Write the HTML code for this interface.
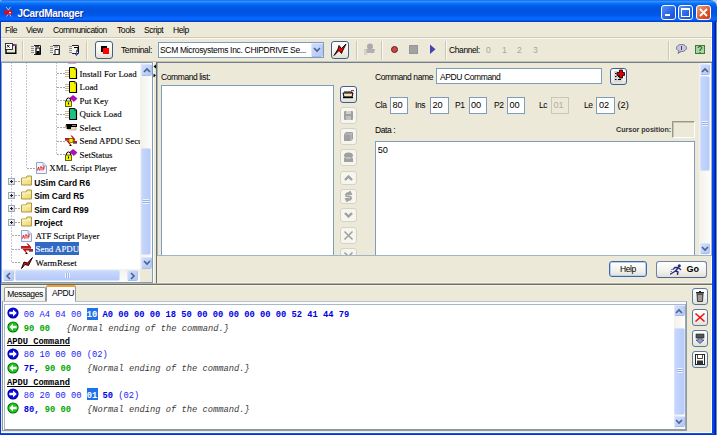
<!DOCTYPE html>
<html><head><meta charset="utf-8">
<style>
*{margin:0;padding:0;box-sizing:border-box}
html,body{width:717px;height:435px;overflow:hidden;background:#c4d4ec}
body{position:relative;font-family:"Liberation Sans",sans-serif;font-size:8.5px;letter-spacing:-0.4px;color:#000}
.a{position:absolute}
.t{position:absolute;white-space:pre;line-height:10px}
#title{left:0;top:0;width:717px;height:22px;border-radius:2px 7px 0 0;
background:linear-gradient(#0058ee 0px,#3d95ff 1px,#2b8dff 2px,#0b76fc 3px,#0265ef 5px,#0058e5 7px,#0054e1 12px,#0058e8 15px,#0766ff 18px,#0966fa 20px,#0042d0 21px,#0042d0 22px)}
#client{left:1px;top:22px;width:711px;height:411px;background:#ece9d8;border-right:1px solid #fbfaf4;border-bottom:1px solid #fbfaf4}
.sep{position:absolute;width:2px;border-left:1px solid #cbc8b8;border-right:1px solid #f8f7f0}
.btn{position:absolute;border:1px solid #3f5f86;border-radius:3px;background:linear-gradient(#fff,#f3f2ec 60%,#e3e0d4)}
.dbtn{position:absolute;border:1px solid #d6d3c5;border-radius:3px;background:#f6f5ee}
.fld{position:absolute;background:#fff;border:1px solid #7f9db9}
.sbar{position:absolute;background:linear-gradient(90deg,#f2f1ea,#fdfdfb)}
.sarr{position:absolute;border:1px solid #dce6fe;border-bottom-color:#a4bcee;border-right-color:#b0c4f0;border-radius:2px;background:linear-gradient(135deg,#cfdcfd,#b2c8f8)}
.thumb{position:absolute;border:1px solid #d4e0fd;border-radius:2px;background:linear-gradient(90deg,#c6d6fd,#b8cbf8)}
.tree{font-family:"Liberation Serif",serif;font-size:8.85px;letter-spacing:0;-webkit-text-stroke:0.12px currentColor}
.bold{font-weight:bold}
.mono{font-family:"Liberation Mono",monospace;font-size:8.75px;letter-spacing:0}
</style></head><body>
<div id="title" class="a"></div>
<!-- title icon -->
<svg class="a" style="left:3px;top:6px" width="12" height="11" viewBox="0 0 12 11">
<path d="M3 1 L6 4.5 M7.5 1 L5 4.5 M3.5 10.5 L5.5 8 M8 10.5 L6.5 8" stroke="#b8c8ea" stroke-width="1"/>
<path d="M1 6.5 Q1 4.6 2.8 4.6 H8 L10.5 6.5 L8 8.5 H2.8 Q1 8.5 1 6.5 Z" fill="#f00010"/><rect x="6" y="6" width="2" height="1.2" fill="#fff"/>
</svg>
<div class="t" style="left:17.5px;top:8px;font-size:10px;font-weight:bold;color:#fff;letter-spacing:-0.33px;line-height:12px;text-shadow:1px 1px 0 #0a2a9a">JCardManager</div>
<!-- title buttons -->
<div class="a" style="left:661px;top:5px;width:15px;height:15px;border:1px solid #fff;border-radius:3px;background:linear-gradient(135deg,#5a8ff6,#2663e5 60%,#1a50d0)"></div>
<div class="a" style="left:665px;top:14px;width:5px;height:2px;background:#fff"></div>
<div class="a" style="left:678px;top:5px;width:15px;height:15px;border:1px solid #fff;border-radius:3px;background:linear-gradient(135deg,#5a8ff6,#2663e5 60%,#1a50d0)"></div>
<div class="a" style="left:681px;top:8px;width:9px;height:9px;border:1px solid #fff;border-top-width:2px"></div>
<div class="a" style="left:696px;top:5px;width:15px;height:15px;border:1px solid #fff;border-radius:3px;background:linear-gradient(135deg,#f0a080,#e0542c 60%,#c83c14)"></div>
<svg class="a" style="left:696px;top:5px" width="15" height="15"><path d="M4 4 L11 11 M11 4 L4 11" stroke="#fff" stroke-width="1.8"/></svg>

<div id="client" class="a"></div>
<!-- menu -->
<div class="t" style="left:5px;top:25px">File</div>
<div class="t" style="left:26px;top:25px">View</div>
<div class="t" style="left:53px;top:25px">Communication</div>
<div class="t" style="left:117px;top:25px">Tools</div>
<div class="t" style="left:144px;top:25px">Script</div>
<div class="t" style="left:173px;top:25px">Help</div>
<div class="a" style="left:1px;top:37px;width:711px;height:1px;background:#cdcabb"></div>
<div class="a" style="left:1px;top:38px;width:711px;height:1px;background:#fbfaf4"></div>

<!-- toolbar -->
<div class="sep" style="left:22px;top:41px;height:19px"></div>
<div class="sep" style="left:86px;top:41px;height:19px"></div>
<div class="sep" style="left:356px;top:41px;height:19px"></div>
<div class="sep" style="left:381px;top:41px;height:19px"></div>
<div class="sep" style="left:445px;top:41px;height:19px"></div>
<div class="sep" style="left:668px;top:41px;height:19px"></div>
<div class="a" style="left:1px;top:61px;width:712px;height:1px;background:#c5c2b2"></div>
<!-- toolbar icons -->
<svg class="a" style="left:5px;top:43px" width="12" height="12" viewBox="0 0 12 12">
<rect x="0.5" y="0.5" width="7" height="6" fill="#fff" stroke="#222" stroke-width="0.9"/><path d="M2 2 L4.5 4.5 M4.5 2 L2 4.5" stroke="#000" stroke-width="0.9"/>
<path d="M1 6.5 V10.3 H10.8 V2 H8" fill="none" stroke="#000" stroke-width="1.4"/><rect x="8.5" y="1" width="2.5" height="2" fill="#9040a0"/>
</svg>
<svg class="a" style="left:31px;top:45px" width="11" height="10" viewBox="0 0 11 10">
<path d="M0 1.5H3 M0 3.5H3 M0 5.5H3 M0 7.5H3" stroke="#909090" stroke-width="1"/>
<path d="M3 0.5 H9.5 V9.5 H3" fill="#f4f4f4" stroke="#222" stroke-width="1"/>
<path d="M5 3 H9 V9 H5 Z" fill="none" stroke="#000" stroke-width="1.2"/><rect x="5.5" y="6" width="3" height="3" fill="#000"/><path d="M4 1.5 H8" stroke="#444"/>
</svg>
<svg class="a" style="left:50px;top:45px" width="10" height="10" viewBox="0 0 10 10">
<path d="M0 1.5H3 M0 3.5H3 M0 5.5H3 M0 7.5H3" stroke="#909090" stroke-width="1"/>
<path d="M3 0.5 H9.5 V9.5 H3" fill="#f4f4f4" stroke="#333" stroke-width="1"/>
<path d="M5 4.5 H9 V9.5 H5 Z" fill="#fff" stroke="#222" stroke-width="1"/><path d="M4 2 H8" stroke="#666"/>
</svg>
<svg class="a" style="left:69px;top:45px" width="11" height="11" viewBox="0 0 11 11">
<path d="M0 1.5H3 M0 3.5H3 M0 5.5H3 M0 7.5H3" stroke="#909090" stroke-width="1"/>
<path d="M3 0.5 H9.5 V8.5 H3" fill="#f4f4f4" stroke="#222" stroke-width="1"/>
<path d="M5 2.5 H9 V7" fill="none" stroke="#000" stroke-width="1.2"/><path d="M7.5 5 V10.5 M5.8 8.8 L7.5 10.5 L9.2 8.8" stroke="#5060c0" stroke-width="1"/>
</svg>
<div class="btn" style="left:95px;top:41px;width:18px;height:18px"></div>
<div class="a" style="left:101px;top:46px;width:6px;height:6px;background:#000"></div>
<div class="a" style="left:103px;top:48px;width:6px;height:6px;background:#f00"></div>
<div class="t" style="left:121px;top:45px">Terminal:</div>
<div class="fld" style="left:158px;top:42px;width:166px;height:16px"></div>
<div class="t" style="left:160px;top:45px;letter-spacing:-0.32px">SCM Microsystems Inc. CHIPDRIVE Se...</div>
<div class="sarr" style="left:311px;top:43px;width:12px;height:14px"></div>
<svg class="a" style="left:313px;top:47px" width="8" height="6"><path d="M1 1 L4 4 L7 1" fill="none" stroke="#4d6185" stroke-width="1.6"/></svg>
<div class="btn" style="left:331px;top:41px;width:18px;height:18px"></div>
<svg class="a" style="left:333px;top:43px" width="14" height="14" viewBox="0 0 14 14">
<path d="M1 12.5 L5 6 L6 2.5 L8.5 5.5 L13 1 L9.5 8 L8.5 10.5 L6 7.5 Z" fill="#f00000" stroke="#000" stroke-width="0.9" stroke-linejoin="round"/>
</svg>
<svg class="a" style="left:364px;top:43px" width="12" height="12" viewBox="0 0 12 12">
<circle cx="6" cy="3.5" r="3" fill="#aaa"/><path d="M2 6 H11 L10 10 H3 Z" fill="#b0b0b0"/><path d="M0 7 H3 M0 9 H3 M0 11 H3" stroke="#bbb"/>
</svg>
<div class="a" style="left:391px;top:46px;width:7px;height:7px;border-radius:50%;background:#c84848;border:0.6px solid #602020"></div>
<div class="a" style="left:409px;top:45px;width:9px;height:9px;background:#a2a2a2;border:1px solid #959595"></div>
<svg class="a" style="left:430px;top:44px" width="6" height="11"><path d="M0 0.5 L5.5 5.3 L0 10 Z" fill="#4444b0"/></svg>
<div class="t" style="left:449px;top:45px">Channel:</div>
<div class="t" style="left:486px;top:45px;color:#a5a5a5">0</div>
<div class="t" style="left:502px;top:45px;color:#a5a5a5">1</div>
<div class="t" style="left:517px;top:45px;color:#a5a5a5">2</div>
<div class="t" style="left:533px;top:45px;color:#a5a5a5">3</div>
<svg class="a" style="left:676px;top:44px" width="11" height="10" viewBox="0 0 11 10">
<ellipse cx="5.5" cy="4" rx="5" ry="3.6" fill="#c8c8e0" stroke="#606080" stroke-width="0.8"/><path d="M3 7 L2 9.5 L5 7.5" fill="#c8c8e0" stroke="#606080" stroke-width="0.8"/><rect x="5" y="2" width="1" height="4" fill="#404060"/>
</svg>
<div class="a" style="left:695px;top:45px;width:10px;height:9px;background:#a8d8a0;border:1px solid #3a7a3a"></div>
<svg class="a" style="left:697px;top:46px" width="6" height="7"><path d="M1 2 Q1 0.5 3 0.5 Q5 0.5 5 2 Q5 3 3 3.5 V5 M3 6 V7" fill="none" stroke="#205020" stroke-width="1"/></svg>


<div class="a" style="left:1px;top:62px;width:152px;height:221px;background:#fff;border:1px solid #7f9db9"></div>
<div class="a" style="left:2px;top:63px;width:138px;height:206px;overflow:hidden">
<div class="a" style="left:8.5px;top:-1px;width:1.5px;height:201px;background:repeating-linear-gradient(#c8c8c8 0 2px,transparent 2px 3px)"></div>
<div class="a" style="left:23.5px;top:-1px;width:1.5px;height:106px;background:repeating-linear-gradient(#c8c8c8 0 2px,transparent 2px 3px)"></div>
<div class="a" style="left:53.5px;top:-1px;width:1.5px;height:93px;background:repeating-linear-gradient(#c8c8c8 0 2px,transparent 2px 3px)"></div>
<div class="a" style="left:55px;top:10px;width:8px;height:1px;background:repeating-linear-gradient(90deg,#a8a8a8 0 2px,transparent 2px 3px)"></div>
<div class="a" style="left:55px;top:24px;width:8px;height:1px;background:repeating-linear-gradient(90deg,#a8a8a8 0 2px,transparent 2px 3px)"></div>
<div class="a" style="left:55px;top:37px;width:8px;height:1px;background:repeating-linear-gradient(90deg,#a8a8a8 0 2px,transparent 2px 3px)"></div>
<div class="a" style="left:55px;top:51px;width:8px;height:1px;background:repeating-linear-gradient(90deg,#a8a8a8 0 2px,transparent 2px 3px)"></div>
<div class="a" style="left:55px;top:64px;width:8px;height:1px;background:repeating-linear-gradient(90deg,#a8a8a8 0 2px,transparent 2px 3px)"></div>
<div class="a" style="left:55px;top:78px;width:8px;height:1px;background:repeating-linear-gradient(90deg,#a8a8a8 0 2px,transparent 2px 3px)"></div>
<div class="a" style="left:55px;top:91px;width:8px;height:1px;background:repeating-linear-gradient(90deg,#a8a8a8 0 2px,transparent 2px 3px)"></div>
<div class="a" style="left:25px;top:105px;width:9px;height:1px;background:repeating-linear-gradient(90deg,#a8a8a8 0 2px,transparent 2px 3px)"></div>
<div class="a" style="left:10px;top:118px;width:9px;height:1px;background:repeating-linear-gradient(90deg,#a8a8a8 0 2px,transparent 2px 3px)"></div>
<div class="a" style="left:10px;top:132px;width:9px;height:1px;background:repeating-linear-gradient(90deg,#a8a8a8 0 2px,transparent 2px 3px)"></div>
<div class="a" style="left:10px;top:145px;width:9px;height:1px;background:repeating-linear-gradient(90deg,#a8a8a8 0 2px,transparent 2px 3px)"></div>
<div class="a" style="left:10px;top:159px;width:9px;height:1px;background:repeating-linear-gradient(90deg,#a8a8a8 0 2px,transparent 2px 3px)"></div>
<div class="a" style="left:10px;top:172px;width:9px;height:1px;background:repeating-linear-gradient(90deg,#a8a8a8 0 2px,transparent 2px 3px)"></div>
<div class="a" style="left:10px;top:186px;width:9px;height:1px;background:repeating-linear-gradient(90deg,#a8a8a8 0 2px,transparent 2px 3px)"></div>
<div class="a" style="left:10px;top:199px;width:9px;height:1px;background:repeating-linear-gradient(90deg,#a8a8a8 0 2px,transparent 2px 3px)"></div>
<div class="a" style="left:66px;top:0px;width:8px;height:1px;background:#f0a0d0"></div>
<svg class="a" style="left:63px;top:4px" width="13" height="12" viewBox="0 0 13 12">
<path d="M0 3.5H5 M0 5.5H5 M0 7.5H5 M0 9.5H5" stroke="#c8b890" stroke-width="1"/>
<path d="M4.5 0.5 H10 L11.5 2 V11.5 H4.5 Z" fill="#f4f400" stroke="#000" stroke-width="1"/>
<path d="M11.5 2.5 V11.5 H5" fill="none" stroke="#000" stroke-width="1.2"/>
<path d="M9.5 0.5 V2.5 H11.5" fill="none" stroke="#808000" stroke-width="0.8"/>
</svg>
<svg class="a" style="left:63px;top:18px" width="13" height="12" viewBox="0 0 13 12">
<path d="M0 3.5H5 M0 5.5H5 M0 7.5H5 M0 9.5H5" stroke="#c8b890" stroke-width="1"/>
<path d="M4.5 0.5 H10 L11.5 2 V11.5 H4.5 Z" fill="#f4f400" stroke="#000" stroke-width="1"/>
<path d="M11.5 2.5 V11.5 H5" fill="none" stroke="#000" stroke-width="1.2"/>
<path d="M9.5 0.5 V2.5 H11.5" fill="none" stroke="#808000" stroke-width="0.8"/>
</svg>
<svg class="a" style="left:63px;top:32px" width="13" height="12" viewBox="0 0 13 12">
<path d="M5 3 L8 0.5 L12 3.5 L9 6.5 Z" fill="#c800c8" stroke="#600060" stroke-width="0.6"/>
<path d="M1.5 6 V5 A2 2 0 0 1 5.5 5 V6" fill="none" stroke="#000" stroke-width="1"/>
<rect x="0.5" y="6" width="6" height="5.5" fill="#f0f000" stroke="#404000" stroke-width="0.8"/>
<rect x="3" y="7.5" width="1" height="2" fill="#000"/>
</svg>
<svg class="a" style="left:63px;top:45px" width="13" height="12" viewBox="0 0 13 12">
<path d="M0 3.5H5 M0 5.5H5 M0 7.5H5 M0 9.5H5" stroke="#c8b890" stroke-width="1"/>
<path d="M4.5 0.5 H10 L11.5 2 V11.5 H4.5 Z" fill="#20c080" stroke="#000" stroke-width="1"/>
<path d="M11.5 2.5 V11.5 H5" fill="none" stroke="#000" stroke-width="1.2"/>
<path d="M9.5 0.5 V2.5 H11.5" fill="none" stroke="#006030" stroke-width="0.8"/>
</svg>
<svg class="a" style="left:63px;top:60px" width="13" height="10" viewBox="0 0 13 10">
<path d="M0.5 2 H11 V7 H4 L0.5 5 Z" fill="#e8dcc0" stroke="#a89870" stroke-width="0.6"/>
<path d="M1 1 H12 V4 H6 V6 H2 Z" fill="#000"/><rect x="7" y="2" width="4" height="1" fill="#888"/>
</svg>
<svg class="a" style="left:63px;top:72px" width="12" height="11" viewBox="0 0 12 11">
<path d="M0 4.5 H10.5 L7 0.5 H5.5 L7.5 3 H0 Z" fill="#f00000"/><path d="M0 5 H10" stroke="#000" stroke-width="1"/>
<path d="M12 6 H1.5 L5 10 H6.5 L4.5 7.5 H12 Z" fill="#f00000"/><path d="M4.5 10.5 H6.5 M8 8 H12" stroke="#000" stroke-width="1"/><rect x="4" y="3.5" width="4" height="4" fill="#f0f000" stroke="#606000" stroke-width="0.6"/></svg>
<svg class="a" style="left:63px;top:86px" width="13" height="12" viewBox="0 0 13 12">
<path d="M5 3 L8 0.5 L12 3.5 L9 6.5 Z" fill="#c800c8" stroke="#600060" stroke-width="0.6"/>
<path d="M1.5 6 V5 A2 2 0 0 1 5.5 5 V6" fill="none" stroke="#000" stroke-width="1"/>
<rect x="0.5" y="6" width="6" height="5.5" fill="#f0f000" stroke="#404000" stroke-width="0.8"/>
<rect x="3" y="7.5" width="1" height="2" fill="#000"/>
</svg>
<svg class="a" style="left:34px;top:99px" width="11" height="12" viewBox="0 0 11 12">
<path d="M0.5 0.5 H7 L10.5 4 V11.5 H0.5 Z" fill="#f2f6fe" stroke="#90a4cc" stroke-width="1"/>
<path d="M7 0.5 V4 H10.5" fill="#d8e2f4" stroke="#90a4cc" stroke-width="0.8"/>
<path d="M1.5 8.5 L2.5 5 L3.5 8.5 M4 5 H6 M5 5 V8.5 M7 8.5 V5 H9 M7 6.7 H8.5" fill="none" stroke="#e82020" stroke-width="1"/>
</svg>
<div class="a" style="left:6px;top:115px;width:7px;height:7px;border:1px solid #98a8c0;background:linear-gradient(135deg,#fff,#d4d4cc)"></div>
<div class="a" style="left:8px;top:118px;width:3px;height:1px;background:#202020"></div>
<div class="a" style="left:9px;top:117px;width:1px;height:3px;background:#202020"></div>
<svg class="a" style="left:18.5px;top:112px" width="12" height="11" viewBox="0 0 12 11">
<defs><linearGradient id="fg" x1="0" y1="0" x2="1" y2="1"><stop offset="0" stop-color="#fff4b0"/><stop offset="1" stop-color="#f0d478"/></linearGradient></defs>
<path d="M0.5 3 H5 L6 1 H10.5 V10 H0.5 Z" fill="url(#fg)" stroke="#a89a40" stroke-width="1"/>
<path d="M1 4 H10" stroke="#fffbe0" stroke-width="0.8"/>
</svg>
<div class="a" style="left:6px;top:129px;width:7px;height:7px;border:1px solid #98a8c0;background:linear-gradient(135deg,#fff,#d4d4cc)"></div>
<div class="a" style="left:8px;top:132px;width:3px;height:1px;background:#202020"></div>
<div class="a" style="left:9px;top:131px;width:1px;height:3px;background:#202020"></div>
<svg class="a" style="left:18.5px;top:126px" width="12" height="11" viewBox="0 0 12 11">
<defs><linearGradient id="fg" x1="0" y1="0" x2="1" y2="1"><stop offset="0" stop-color="#fff4b0"/><stop offset="1" stop-color="#f0d478"/></linearGradient></defs>
<path d="M0.5 3 H5 L6 1 H10.5 V10 H0.5 Z" fill="url(#fg)" stroke="#a89a40" stroke-width="1"/>
<path d="M1 4 H10" stroke="#fffbe0" stroke-width="0.8"/>
</svg>
<div class="a" style="left:6px;top:142px;width:7px;height:7px;border:1px solid #98a8c0;background:linear-gradient(135deg,#fff,#d4d4cc)"></div>
<div class="a" style="left:8px;top:145px;width:3px;height:1px;background:#202020"></div>
<div class="a" style="left:9px;top:144px;width:1px;height:3px;background:#202020"></div>
<svg class="a" style="left:18.5px;top:139px" width="12" height="11" viewBox="0 0 12 11">
<defs><linearGradient id="fg" x1="0" y1="0" x2="1" y2="1"><stop offset="0" stop-color="#fff4b0"/><stop offset="1" stop-color="#f0d478"/></linearGradient></defs>
<path d="M0.5 3 H5 L6 1 H10.5 V10 H0.5 Z" fill="url(#fg)" stroke="#a89a40" stroke-width="1"/>
<path d="M1 4 H10" stroke="#fffbe0" stroke-width="0.8"/>
</svg>
<div class="a" style="left:6px;top:156px;width:7px;height:7px;border:1px solid #98a8c0;background:linear-gradient(135deg,#fff,#d4d4cc)"></div>
<div class="a" style="left:8px;top:159px;width:3px;height:1px;background:#202020"></div>
<div class="a" style="left:9px;top:158px;width:1px;height:3px;background:#202020"></div>
<svg class="a" style="left:18.5px;top:153px" width="12" height="11" viewBox="0 0 12 11">
<defs><linearGradient id="fg" x1="0" y1="0" x2="1" y2="1"><stop offset="0" stop-color="#fff4b0"/><stop offset="1" stop-color="#f0d478"/></linearGradient></defs>
<path d="M0.5 3 H5 L6 1 H10.5 V10 H0.5 Z" fill="url(#fg)" stroke="#a89a40" stroke-width="1"/>
<path d="M1 4 H10" stroke="#fffbe0" stroke-width="0.8"/>
</svg>
<svg class="a" style="left:19px;top:166.5px" width="11" height="12" viewBox="0 0 11 12">
<path d="M0.5 0.5 H7 L10.5 4 V11.5 H0.5 Z" fill="#f2f6fe" stroke="#90a4cc" stroke-width="1"/>
<path d="M7 0.5 V4 H10.5" fill="#d8e2f4" stroke="#90a4cc" stroke-width="0.8"/>
<path d="M1.5 8.5 L2.5 5 L3.5 8.5 M4 5 H6 M5 5 V8.5 M7 8.5 V5 H9 M7 6.7 H8.5" fill="none" stroke="#e82020" stroke-width="1"/>
</svg>
<svg class="a" style="left:19px;top:180px" width="12" height="11" viewBox="0 0 12 11">
<path d="M0 4.5 H10.5 L7 0.5 H5.5 L7.5 3 H0 Z" fill="#f00000"/><path d="M0 5 H10" stroke="#000" stroke-width="1"/>
<path d="M12 6 H1.5 L5 10 H6.5 L4.5 7.5 H12 Z" fill="#f00000"/><path d="M4.5 10.5 H6.5 M8 8 H12" stroke="#000" stroke-width="1"/></svg>
<svg class="a" style="left:19px;top:193.5px" width="12" height="12" viewBox="0 0 12 12">
<path d="M0.5 11.5 L3 5 L6.5 6 L11.5 0.5 L7.5 8.5 L4 7.5 Z" fill="#e80000" stroke="#000" stroke-width="0.9"/>
</svg>
<div class="t tree" style="left:77.6px;top:5.5px;color:#000">Install For Load</div>
<div class="t tree" style="left:77.6px;top:19.0px;color:#000">Load</div>
<div class="t tree" style="left:77.6px;top:32.5px;color:#000">Put Key</div>
<div class="t tree" style="left:77.6px;top:46.0px;color:#000">Quick Load</div>
<div class="t tree" style="left:77.6px;top:59.5px;color:#000">Select</div>
<div class="t tree" style="left:77.6px;top:73.0px;color:#000">Send APDU Secu</div>
<div class="t tree" style="left:77.6px;top:86.5px;color:#000">SetStatus</div>
<div class="t tree" style="left:47.3px;top:100.0px;color:#000">XML Script Player</div>
<div class="t" style="left:32.2px;top:114.5px;font-weight:bold;font-size:8.4px;letter-spacing:0px;color:#000">USim Card R6</div>
<div class="t" style="left:32.2px;top:128.0px;font-weight:bold;font-size:8.4px;letter-spacing:0px;color:#000">Sim Card R5</div>
<div class="t" style="left:32.2px;top:141.5px;font-weight:bold;font-size:8.4px;letter-spacing:0px;color:#000">Sim Card R99</div>
<div class="t" style="left:32.2px;top:155.0px;font-weight:bold;font-size:8.4px;letter-spacing:0px;color:#000">Project</div>
<div class="t tree" style="left:33.6px;top:167.5px;color:#000">ATF Script Player</div>
<div class="a" style="left:33px;top:179px;width:44px;height:13px;background:#316ac5"></div>
<div class="t tree" style="left:33.6px;top:181.0px;color:#fff">Send APDU</div>
<div class="t tree" style="left:33.6px;top:194.5px;color:#000">WarmReset</div>
</div>
<div class="sbar" style="left:140px;top:63px;width:12px;height:206px"></div>
<div class="sarr" style="left:141px;top:64px;width:11px;height:12px"></div>
<svg class="a" style="left:143px;top:67px" width="8" height="6"><path d="M1 5 L4 2 L7 5" fill="none" stroke="#4d6185" stroke-width="1.6"/></svg>
<div class="thumb" style="left:141px;top:148px;width:10px;height:107px"></div>
<div class="a" style="left:143px;top:199px;width:6px;height:5px;background:repeating-linear-gradient(#eef3fe 0 1px,#98b0e4 1px 2px)"></div>
<div class="sarr" style="left:141px;top:257px;width:11px;height:12px"></div>
<svg class="a" style="left:143px;top:260px" width="8" height="6"><path d="M1 1 L4 4 L7 1" fill="none" stroke="#4d6185" stroke-width="1.6"/></svg>
<div class="sbar" style="left:2px;top:269px;width:138px;height:13px;background:linear-gradient(#f2f1ea,#fdfdfb)"></div>
<div class="sarr" style="left:3px;top:270px;width:11px;height:11px"></div>
<svg class="a" style="left:5px;top:272px" width="7" height="8"><path d="M5 1 L2 4 L5 7" fill="none" stroke="#4d6185" stroke-width="1.6"/></svg>
<div class="thumb" style="left:15px;top:270px;width:105px;height:11px;background:linear-gradient(#c9d8fd,#b4c9f7)"></div>
<div class="a" style="left:65px;top:273px;width:5px;height:5px;background:repeating-linear-gradient(90deg,#eef3fe 0 1px,#98b0e4 1px 2px)"></div>
<div class="sarr" style="left:127px;top:270px;width:11px;height:11px"></div>
<svg class="a" style="left:129px;top:272px" width="7" height="8"><path d="M2 1 L5 4 L2 7" fill="none" stroke="#4d6185" stroke-width="1.6"/></svg>
<div class="a" style="left:153px;top:62px;width:1px;height:221px;background:#fff"></div>
<div class="a" style="left:140px;top:269px;width:12px;height:13px;background:#ece9d8"></div>
<div class="a" style="left:156px;top:62px;width:557px;height:1px;background:#6f7f8f"></div>
<div class="a" style="left:156px;top:62px;width:1px;height:222px;background:#716f64"></div>
<div class="a" style="left:157px;top:256px;width:554px;height:27px;background:#ece9d8;box-shadow:inset 0 -1px 0 #f2f0e6"></div>
<svg class="a" style="left:153px;top:64px" width="3" height="14"><path d="M3 0.5 L0.5 2.5 L3 4.5 Z M0.5 9.5 L3 11.5 L0.5 13.5 Z" fill="#000"/></svg>
<div class="a" style="left:157px;top:63px;width:1px;height:192px;background:#a0b4c8"></div>
<div class="a" style="left:157px;top:255px;width:555px;height:1px;background:#a0b4c8"></div>
<div class="a" style="left:711px;top:63px;width:1px;height:193px;background:#a0b4c8"></div>
<div class="a" style="left:1px;top:283px;width:711px;height:3px;background:linear-gradient(#b4b2a4 0 1px,#6f6e62 1px 2px,#f6f4ea 2px 3px)"></div>
<div class="t" style="left:161px;top:71.5px">Command list:</div>
<div class="a" style="left:158px;top:63px;width:541px;height:192px;overflow:hidden">
<div class="a" style="left:3px;top:22px;width:173px;height:175px;background:#fff;border:1px solid #7f9db9"></div>
<div class="btn" style="left:182px;top:23px;width:17px;height:17px;border-color:#3a5f95"></div>
<svg class="a" style="left:184px;top:26px" width="13" height="11" viewBox="0 0 13 11"><path d="M1 4 H11 L10 8 H2 Z" fill="#f4e0c0" stroke="#000" stroke-width="1"/><path d="M2 3 H10 V4" fill="none" stroke="#000"/><rect x="9" y="1" width="3" height="1.2" fill="#c03030"/><path d="M1 8.5 H11" stroke="#000" stroke-width="1.4"/></svg>
<div class="dbtn" style="left:182px;top:44px;width:17px;height:17px"></div>
<div class="dbtn" style="left:182px;top:65px;width:17px;height:17px"></div>
<div class="dbtn" style="left:182px;top:86px;width:17px;height:17px"></div>
<div class="dbtn" style="left:182px;top:108px;width:17px;height:14px"></div>
<div class="dbtn" style="left:182px;top:126px;width:17px;height:15px"></div>
<div class="dbtn" style="left:182px;top:145px;width:17px;height:14px"></div>
<div class="dbtn" style="left:182px;top:164px;width:17px;height:17px"></div>
<div class="dbtn" style="left:182px;top:185px;width:17px;height:17px"></div>
<svg class="a" style="left:185px;top:47px" width="11" height="11" viewBox="0 0 11 11"><path d="M1 2 Q1 1 2 1 H9 Q10 1 10 2 V9 Q10 10 9 10 H2 Q1 10 1 9 Z" fill="#a0a0a0"/><rect x="3" y="1" width="5" height="3" fill="#d0d0d0"/><rect x="3" y="6" width="5" height="4" fill="#c0c0c0"/></svg>
<svg class="a" style="left:185px;top:68px" width="11" height="11" viewBox="0 0 11 11"><path d="M3 1 H10 V8 L8 10 H1 V3 Z" fill="#a0a0a0"/><path d="M1 3 H8 V10 M8 3 L10 1" fill="none" stroke="#ccc" stroke-width="0.8"/></svg>
<svg class="a" style="left:185px;top:89px" width="11" height="11" viewBox="0 0 11 11"><ellipse cx="5.5" cy="3.5" rx="4.5" ry="3" fill="#a0a0a0"/><rect x="1" y="6" width="9" height="4" fill="#a0a0a0"/><rect x="3" y="5.5" width="5" height="1" fill="#ddd"/></svg>
<svg class="a" style="left:186px;top:112px" width="9" height="6"><path d="M1 5 L4.5 1.5 L8 5" fill="none" stroke="#a0a0a0" stroke-width="2.4"/></svg>
<svg class="a" style="left:185px;top:128px" width="11" height="11" viewBox="0 0 11 11"><path d="M2 4 Q3 1 6 1.5 L7 0 L9 3.5 L5 4 L5.5 3 Q4 3 3.5 4.5 Z M9 7 Q8 10 5 9.5 L4 11 L2 7.5 L6 7 L5.5 8 Q7 8 7.5 6.5 Z" fill="#a0a0a0" stroke="#a0a0a0" stroke-width="0.8"/><path d="M2.5 5 L8.5 6" stroke="#a0a0a0" stroke-width="1.6"/></svg>
<svg class="a" style="left:186px;top:149px" width="9" height="6"><path d="M1 1 L4.5 4.5 L8 1" fill="none" stroke="#a0a0a0" stroke-width="2.4"/></svg>
<svg class="a" style="left:185px;top:167px" width="11" height="11"><path d="M1.5 1.5 L9.5 9.5 M9.5 1.5 L1.5 9.5" stroke="#a0a0a0" stroke-width="1.6"/></svg>
<svg class="a" style="left:185px;top:188px" width="11" height="11"><path d="M1.5 1.5 L9.5 9.5 M9.5 1.5 L1.5 9.5" stroke="#a0a0a0" stroke-width="1.6"/></svg>
<div class="t" style="left:217px;top:9px;">Command name</div>
<div class="fld" style="left:278px;top:5px;width:166px;height:16px;"></div>
<div class="t" style="left:282px;top:9px;">APDU Command</div>
<div class="btn" style="left:452px;top:5px;width:17px;height:17px;border-color:#3a5f95"></div>
<svg class="a" style="left:454px;top:6px" width="15" height="15" viewBox="0 0 15 15"><rect x="2" y="2" width="8" height="11" fill="#d8d8d8"/><path d="M3 4.5 H4.5 M3 7.5 H4.5 M3 10.5 H4.5 M6 10.5 H9 M6 7.5 H7" stroke="#000" stroke-width="1.2"/><path d="M5 3.5 H7.5 V1 H10.5 V3.5 H12.5 V6.5 H10.5 V9 H7.5 V6.5 H5 Z" fill="#e00000" stroke="#000" stroke-width="0.8"/></svg>
<div class="t" style="left:217px;top:37px;">Cla</div>
<div class="fld" style="left:232px;top:34px;width:18px;height:17px;"></div>
<div class="t" style="left:234.5px;top:36.5px;font-size:9.2px;letter-spacing:0">80</div>
<div class="t" style="left:257px;top:37px;">Ins</div>
<div class="fld" style="left:272px;top:34px;width:19px;height:17px;"></div>
<div class="t" style="left:274.5px;top:36.5px;font-size:9.2px;letter-spacing:0">20</div>
<div class="t" style="left:297px;top:37px;">P1</div>
<div class="fld" style="left:311px;top:34px;width:18px;height:17px;"></div>
<div class="t" style="left:313px;top:36.5px;font-size:9.2px;letter-spacing:0">00</div>
<div class="t" style="left:336px;top:37px;">P2</div>
<div class="fld" style="left:349px;top:34px;width:18px;height:17px;"></div>
<div class="t" style="left:351.5px;top:36.5px;font-size:9.2px;letter-spacing:0">00</div>
<div class="t" style="left:381px;top:37px;">Lc</div>
<div class="fld" style="left:393px;top:34px;width:18px;height:17px;background:#ece9d8;border-color:#c9c7ba"></div>
<div class="t" style="left:395.5px;top:36.5px;color:#b0ae9f;font-size:9.2px;letter-spacing:0">01</div>
<div class="t" style="left:426px;top:37px;">Le</div>
<div class="fld" style="left:438px;top:34px;width:19px;height:17px;"></div>
<div class="t" style="left:441px;top:36.5px;font-size:9.2px;letter-spacing:0">02</div>
<div class="t" style="left:459.5px;top:36.5px;font-size:9.2px;letter-spacing:0">(2)</div>
<div class="t" style="left:217px;top:62px;">Data :</div>
<div class="t" style="left:458px;top:61.8px;font-size:7.2px;font-weight:bold;letter-spacing:-0.05px;color:#383838">Cursor position:</div>
<div class="a" style="left:514px;top:58px;width:23px;height:17px;border:1px solid #9a978a;border-right-color:#fff;border-bottom-color:#fff;box-shadow:inset 1px 1px 0 #c8c5b5;background:#ece9d8"></div>
<div class="fld" style="left:217px;top:78px;width:320px;height:130px;"></div>
<div class="t" style="left:219.7px;top:81.5px;font-size:9.2px;letter-spacing:0">50</div>
</div>
<div class="sbar" style="left:699px;top:63px;width:12px;height:192px"></div>
<div class="sarr" style="left:700px;top:64px;width:10px;height:11px"></div>
<svg class="a" style="left:701px;top:67px" width="8" height="6"><path d="M1 5 L4 2 L7 5" fill="none" stroke="#4d6185" stroke-width="1.6"/></svg>
<div class="thumb" style="left:700px;top:76px;width:10px;height:95px"></div>
<div class="a" style="left:702px;top:121px;width:6px;height:5px;background:repeating-linear-gradient(#eef3fe 0 1px,#98b0e4 1px 2px)"></div>
<div class="sarr" style="left:700px;top:243px;width:10px;height:11px"></div>
<svg class="a" style="left:701px;top:246px" width="8" height="6"><path d="M1 1 L4 4 L7 1" fill="none" stroke="#4d6185" stroke-width="1.6"/></svg>
<div class="btn" style="left:609px;top:261px;width:38px;height:16px;border-color:#3c6aa8;box-shadow:inset 0 0 0 1px #b8d0f8"></div>
<div class="t" style="left:620px;top:264px">Help</div>
<div class="btn" style="left:656px;top:261px;width:51px;height:17px;border-color:#6f84a8;border-bottom-color:#4a6590"></div>
<svg class="a" style="left:670px;top:264px" width="12" height="11" viewBox="0 0 12 11"><circle cx="9.3" cy="1.8" r="1.5" fill="#2a2a80"/><path d="M8.5 3.5 L5.5 7 M8.5 3.8 L10.5 5.5 M8 3.5 L5 3.5 L3.5 5 M5.5 7 L8 8 L7.5 10.5 M5.5 7 L3 8.5 L0.5 10" fill="none" stroke="#2a2a80" stroke-width="1.4" stroke-linecap="round"/><path d="M1 5.5 H3 M0.5 7.5 H2" stroke="#6060b0" stroke-width="0.8"/></svg>
<div class="t" style="left:686.5px;top:264px;font-weight:bold;font-size:9px;letter-spacing:-0.1px">Go</div>
<div class="a" style="left:4px;top:287px;width:42px;height:15px;border:1px solid #919b9c;border-bottom:none;border-radius:2px 2px 0 0;background:linear-gradient(#fefefe,#f0efe8)"></div>
<div class="t" style="left:7.3px;top:289px">Messages</div>
<div class="a" style="left:46px;top:286px;width:30px;height:17px;border:1px solid #919b9c;border-bottom:none;border-radius:2px 2px 0 0;background:#fcfcfe"></div>
<div class="a" style="left:46px;top:285px;width:30px;height:2px;background:#f0a030;border-radius:2px 2px 0 0"></div>
<div class="t" style="left:52px;top:288px">APDU</div>
<div class="a" style="left:2px;top:301px;width:685px;height:130px;background:#fcfcfe;border:1px solid #919b9c;border-top-color:#b8c0c8"></div>
<div class="a" style="left:47px;top:301px;width:28px;height:1px;background:#fcfcfe"></div>
<div class="a" style="left:4px;top:304px;width:682px;height:126px;background:#fff;border:1px solid #a8b8cc;border-right-color:#98a8b8;border-bottom-color:#8898a8"></div>
<div class="sbar" style="left:674px;top:305px;width:11px;height:124px"></div>
<div class="sarr" style="left:674px;top:305px;width:11px;height:11px"></div>
<svg class="a" style="left:675px;top:308px" width="8" height="6"><path d="M1 5 L4 2 L7 5" fill="none" stroke="#4d6185" stroke-width="1.6"/></svg>
<div class="thumb" style="left:674px;top:328px;width:11px;height:87px"></div>
<div class="a" style="left:677px;top:368px;width:6px;height:5px;background:repeating-linear-gradient(#eef3fe 0 1px,#98b0e4 1px 2px)"></div>
<div class="sarr" style="left:674px;top:416px;width:11px;height:11px"></div>
<svg class="a" style="left:675px;top:419px" width="8" height="6"><path d="M1 1 L4 4 L7 1" fill="none" stroke="#4d6185" stroke-width="1.6"/></svg>
<div class="btn" style="left:692px;top:288px;width:16px;height:17px;border-color:#5a7aa0"></div>
<div class="btn" style="left:692px;top:309px;width:16px;height:17px;border-color:#5a7aa0"></div>
<div class="btn" style="left:692px;top:330px;width:16px;height:17px;border-color:#5a7aa0"></div>
<div class="btn" style="left:692px;top:351px;width:16px;height:17px;border-color:#5a7aa0"></div>
<svg class="a" style="left:695px;top:291px" width="10" height="11" viewBox="0 0 10 11"><rect x="1" y="1" width="8" height="1.5" fill="#222"/><rect x="4" y="0" width="2" height="1" fill="#222"/><path d="M2 3 H8 L7.5 10.5 H2.5 Z" fill="#777" stroke="#222" stroke-width="0.8"/><path d="M4 4 V10 M6 4 V10" stroke="#ddd" stroke-width="0.7"/></svg>
<svg class="a" style="left:694px;top:312px" width="12" height="11"><path d="M1.5 1.5 L10.5 9.5 M10.5 1.5 L1.5 9.5" stroke="#f01010" stroke-width="1.6"/></svg>
<svg class="a" style="left:695px;top:333px" width="10" height="11" viewBox="0 0 10 11"><rect x="1" y="1" width="8" height="4" fill="#555" stroke="#222" stroke-width="0.6"/><path d="M3 5 H7 V7 H9 L5 10.5 L1 7 H3 Z" fill="#8a9ad0" stroke="#303050" stroke-width="0.6"/></svg>
<svg class="a" style="left:695px;top:354px" width="10" height="11" viewBox="0 0 10 11"><rect x="0.5" y="0.5" width="9" height="10" fill="#fff" stroke="#222"/><rect x="2.5" y="0.5" width="5" height="4" fill="#fff" stroke="#222" stroke-width="0.8"/><rect x="2" y="6.5" width="6" height="4" fill="#333"/></svg>
<svg class="a" style="left:6.5px;top:307px" width="12" height="12" viewBox="0 0 12 12"><circle cx="6" cy="6" r="5.6" fill="#000090"/><circle cx="6" cy="6" r="4.7" fill="#0808e0"/><path d="M2.3 4.8 H6 V2.4 L9.8 6 L6 9.6 V7.2 H2.3 Z" fill="#fff"/></svg>
<div class="t mono" style="left:23.7px;top:309.5px;color:#1c1cf4;">00 A4 04 00</div>
<div class="a" style="left:86.5px;top:307.5px;width:11px;height:12px;background:#1f72e8"></div>
<div class="t mono" style="left:86.7px;top:309.5px;color:#fff;font-weight:bold;">10</div>
<div class="t mono" style="left:102.45px;top:309.5px;color:#0000e8;font-weight:bold;">A0 00 00 00 18 50 00 00 00 00 00 00 52 41 44 79</div>
<svg class="a" style="left:6.5px;top:321px" width="12" height="12" viewBox="0 0 12 12"><circle cx="6" cy="6" r="5.6" fill="#006000"/><circle cx="6" cy="6" r="4.7" fill="#18c818"/><path d="M9.7 4.8 H6 V2.4 L2.2 6 L6 9.6 V7.2 H9.7 Z" fill="#fff"/></svg>
<div class="t mono" style="left:23.7px;top:323.5px;color:#00a800;font-weight:bold;">90 00</div>
<div class="t mono" style="left:66.225px;top:323.5px;color:#3a3a3a;font-style:italic;">{Normal ending of the command.}</div>
<div class="t mono" style="left:7px;top:337.0px;font-weight:bold;text-decoration:underline">APDU Command</div>
<svg class="a" style="left:6.5px;top:347.5px" width="12" height="12" viewBox="0 0 12 12"><circle cx="6" cy="6" r="5.6" fill="#000090"/><circle cx="6" cy="6" r="4.7" fill="#0808e0"/><path d="M2.3 4.8 H6 V2.4 L9.8 6 L6 9.6 V7.2 H2.3 Z" fill="#fff"/></svg>
<div class="t mono" style="left:23.7px;top:350.0px;color:#1c1cf4;">80 10 00 00 (02)</div>
<svg class="a" style="left:6.5px;top:361.5px" width="12" height="12" viewBox="0 0 12 12"><circle cx="6" cy="6" r="5.6" fill="#006000"/><circle cx="6" cy="6" r="4.7" fill="#18c818"/><path d="M9.7 4.8 H6 V2.4 L2.2 6 L6 9.6 V7.2 H9.7 Z" fill="#fff"/></svg>
<div class="t mono" style="left:23.7px;top:364.0px;color:#0000e8;font-weight:bold;">7F,</div>
<div class="t mono" style="left:44.7px;top:364.0px;color:#00a800;font-weight:bold;">90 00</div>
<div class="t mono" style="left:86.9625px;top:364.0px;color:#3a3a3a;font-style:italic;">{Normal ending of the command.}</div>
<div class="t mono" style="left:7px;top:377.5px;font-weight:bold;text-decoration:underline">APDU Command</div>
<svg class="a" style="left:6.5px;top:388px" width="12" height="12" viewBox="0 0 12 12"><circle cx="6" cy="6" r="5.6" fill="#000090"/><circle cx="6" cy="6" r="4.7" fill="#0808e0"/><path d="M2.3 4.8 H6 V2.4 L9.8 6 L6 9.6 V7.2 H2.3 Z" fill="#fff"/></svg>
<div class="t mono" style="left:23.7px;top:390.5px;color:#1c1cf4;">80 20 00 00</div>
<div class="a" style="left:86.5px;top:388px;width:11px;height:12px;background:#1f72e8"></div>
<div class="t mono" style="left:86.7px;top:390.5px;color:#fff;font-weight:bold;">01</div>
<div class="t mono" style="left:102.45px;top:390.5px;color:#0000e8;font-weight:bold;">50</div>
<div class="t mono" style="left:118.2px;top:390.5px;color:#1c1cf4;">(02)</div>
<svg class="a" style="left:6.5px;top:402px" width="12" height="12" viewBox="0 0 12 12"><circle cx="6" cy="6" r="5.6" fill="#006000"/><circle cx="6" cy="6" r="4.7" fill="#18c818"/><path d="M9.7 4.8 H6 V2.4 L2.2 6 L6 9.6 V7.2 H9.7 Z" fill="#fff"/></svg>
<div class="t mono" style="left:23.7px;top:404.5px;color:#0000e8;font-weight:bold;">80,</div>
<div class="t mono" style="left:44.7px;top:404.5px;color:#00a800;font-weight:bold;">90 00</div>
<div class="t mono" style="left:86.9625px;top:404.5px;color:#3a3a3a;font-style:italic;">{Normal ending of the command.}</div>
<div class="a" style="left:712px;top:22px;width:5px;height:413px;background:linear-gradient(90deg,#0846e6 0 2px,#0030c8 2px 3px,#0020a0 3px 4px,#6a94c4 4px 5px)"></div>
<div class="a" style="left:0px;top:433px;width:714px;height:2px;background:linear-gradient(#1850e8 0 1px,#0038d8 1px 2px)"></div>
<div class="a" style="left:0px;top:22px;width:1px;height:413px;background:#0838d8"></div>
</body></html>
